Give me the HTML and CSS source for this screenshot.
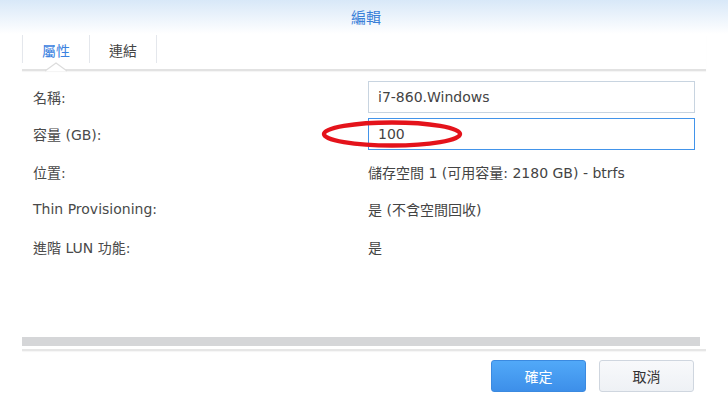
FILE: index.html
```html
<!DOCTYPE html>
<html>
<head>
<meta charset="utf-8">
<link rel="stylesheet" href="styles.css">
</head>
<body>
<div class="dialog">
  <div class="header"><span class="title">編輯</span></div>
  <div class="tabs">
    <div class="tab active">屬性</div>
    <div class="tab">連結</div>
    <svg class="notch" width="22" height="10" viewBox="0 0 22 10"><polygon points="0,9 11,1 22,9" fill="#fff"/><polyline points="0,9 11,1 22,9" fill="none" stroke="#dcdcdc" stroke-width="1.2"/></svg>
  </div>
  <div class="form">
    <div class="label">名稱:</div>
    <div class="value"><div class="input">i7-860.Windows</div></div>
    <div class="label">容量 (GB):</div>
    <div class="value"><div class="input focus">100</div></div>
    <div class="label">位置:</div>
    <div class="value">儲存空間 1 (可用容量: 2180 GB) - btrfs</div>
    <div class="label">Thin Provisioning:</div>
    <div class="value">是 (不含空間回收)</div>
    <div class="label">進階 LUN 功能:</div>
    <div class="value">是</div>
  </div>
  <div class="spacer"></div>
  <div class="scrollbar"></div>
  <div class="footline"></div>
  <div class="footer">
    <button class="btn primary">確定</button>
    <button class="btn">取消</button>
  </div>
  <svg class="ellipse" width="150" height="34" viewBox="0 0 150 34"><ellipse cx="75" cy="17" rx="68" ry="11.5" fill="none" stroke="#e4131b" stroke-width="4.4"/></svg>
</div>
</body>
</html>
```
FILE: styles.css
```css
html, body {
  margin: 0;
  padding: 0;
  background: #fff;
}
body {
  width: 728px;
  height: 400px;
  overflow: hidden;
  font-family: "DejaVu Sans", "Noto Sans CJK TC", sans-serif;
  font-size: 14px;
  color: #4a4a4a;
}
.dialog {
  position: relative;
  height: 400px;
  display: flex;
  flex-direction: column;
}
.header {
  height: 34px;
  background: linear-gradient(#d8e8f8, #ffffff);
  display: flex;
  align-items: center;
  justify-content: center;
}
.title {
  color: #3a7fd8;
  font-size: 15px;
  margin-left: 4px;
  margin-top: -2px;
}
.tabs {
  position: relative;
  margin: 1px 22px 0 22px;
  height: 34px;
  display: flex;
  align-items: flex-start;
  border-bottom: 2px solid #e2e2e2;
  box-shadow: 0 1px 1px rgba(0,0,0,0.04);
}
.tab {
  width: 67px;
  height: 28px;
  display: flex;
  align-items: center;
  justify-content: center;
  border-left: 1px solid #e4e7ec;
  color: #444;
  padding-top: 2px;
  box-sizing: border-box;
}
.tab + .tab {
  width: 68px;
  border-right: 1px solid #e4e7ec;
}
.tab.active {
  color: #3b82e0;
}
.notch {
  position: absolute;
  left: 23px;
  bottom: -3px;
}
.form {
  margin-top: 7px;
  display: grid;
  grid-template-columns: 335px 327px;
  grid-auto-rows: 37.5px;
  padding-left: 33px;
}
.label, .value {
  display: flex;
  align-items: center;
}
.value {
  color: #444;
}
.input {
  width: 100%;
  height: 32px;
  box-sizing: border-box;
  border: 1px solid #c8d4e0;
  display: flex;
  align-items: center;
  padding-left: 9px;
  color: #444;
}
.input.focus {
  border-color: #4294ea;
}
.spacer {
  flex: 1;
}
.scrollbar {
  margin: 0 28px 0 22px;
  height: 9px;
  background: #d5d6d8;
}
.footline {
  margin: 3px 22px 0 22px;
  height: 2px;
  background: #e6e6e6;
  box-shadow: 0 1px 1px rgba(0,0,0,0.04);
}
.footer {
  height: 49px;
  display: flex;
  justify-content: flex-end;
  align-items: flex-start;
  gap: 13px;
  padding: 9px 34px 0 0;
  box-sizing: border-box;
}
.btn {
  width: 95px;
  height: 32px;
  border-radius: 3px;
  border: 1px solid #cfd6df;
  background: linear-gradient(#f8f9fb, #eef1f5);
  font-family: "DejaVu Sans", "Noto Sans CJK TC", sans-serif;
  font-size: 14px;
  color: #333;
  padding: 0;
}
.btn.primary {
  border-color: #3b8ae0;
  background: linear-gradient(#51a9f8, #3d8fe9);
  color: #fff;
}
.ellipse {
  position: absolute;
  left: 317px;
  top: 117px;
}
```
